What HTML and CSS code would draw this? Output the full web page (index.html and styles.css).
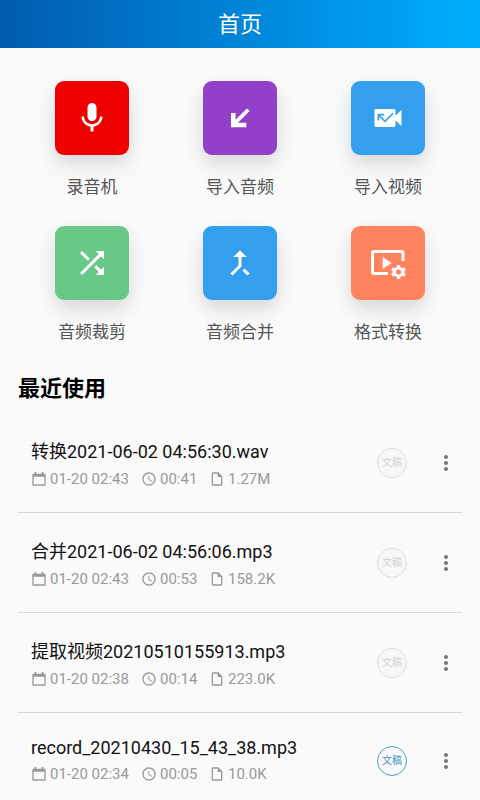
FILE: index.html
```html
<!DOCTYPE html>
<html lang="zh-CN">
<head>
<meta charset="utf-8">
<meta name="viewport" content="width=device-width, initial-scale=1">
<title>首页</title>
<link rel="stylesheet" href="styles.css">
</head>
<body>
<svg class="sprite" aria-hidden="true">
  <symbol id="calendar" viewBox="-1 -1 18 18"><path fill-rule="evenodd" d="M3 0h2v2h6V0h2v2h1.500q1 0 1 1v11.500q0 1-1 1h-13q-1 0-1-1V3q0-1 1-1H3zM2 5.500V14h12V5.500z"/></symbol>
  <symbol id="clock" viewBox="0 0 24 24"><path d="M11.990 2C6.470 2 2 6.480 2 12s4.470 10 9.990 10C17.520 22 22 17.520 22 12S17.520 2 11.990 2zM12 20c-4.420 0-8-3.580-8-8s3.580-8 8-8 8 3.580 8 8-3.580 8-8 8zm.5-13H11v6l5.250 3.150.75-1.230-4.500-2.670z"/></symbol>
  <symbol id="file" viewBox="0 0 24 24"><path d="M14 2H6c-1.100 0-2 .9-2 2v16c0 1.100.9 2 2 2h12c1.100 0 2-.9 2-2V8l-6-6zM6 20V4h7v5h5v11H6z"/></symbol>
  <symbol id="more" viewBox="0 0 24 24"><path d="M12 8c1.100 0 2-.9 2-2s-.9-2-2-2-2 .9-2 2 .9 2 2 2zm0 2c-1.100 0-2 .9-2 2s.9 2 2 2 2-.9 2-2-.9-2-2-2zm0 6c-1.100 0-2 .9-2 2s.9 2 2 2 2-.9 2-2-.9-2-2-2z"/></symbol>
</svg>
<header class="topbar"><h1 class="topbar-title">首页</h1></header>
<main class="content">
  <nav class="tools">
    <button class="tool" type="button">
      <span class="tile red"><svg class="tile-icon" viewBox="0 0 24 24"><path d="M12 14c1.660 0 3-1.340 3-3V5c0-1.660-1.340-3-3-3S9 3.340 9 5v6c0 1.660 1.340 3 3 3zm5.300-3c0 3-2.540 5.100-5.300 5.100S6.700 14 6.700 11H5c0 3.410 2.720 6.230 6 6.720V21h2v-3.280c3.280-.48 6-3.300 6-6.720h-1.700z"/></svg></span>
      <span class="tool-label">录音机</span>
    </button>
    <button class="tool" type="button">
      <span class="tile purple"><svg class="tile-icon" viewBox="0 0 24 24"><path d="M18.400 7.400 16.600 5.600 9 13.200V8.600H6V18.200h10.200v-3h-5.600z"/></svg></span>
      <span class="tool-label">导入音频</span>
    </button>
    <button class="tool" type="button">
      <span class="tile blue"><svg class="tile-icon" viewBox="0 0 24 24"><path fill-rule="evenodd" d="M17 10.500V7c0-.55-.45-1-1-1H4c-.55 0-1 .45-1 1v10c0 .55.450 1 1 1h12c.55 0 1-.45 1-1v-3.500l4 4v-11l-4 4zM10 15l-3.890-3.890v2.550H5V9.220h4.440v1.110H6.890l3.110 3.110 4.990-5 .79.780L10 15z"/></svg></span>
      <span class="tool-label">导入视频</span>
    </button>
    <button class="tool" type="button">
      <span class="tile green"><svg class="tile-icon" viewBox="0 0 24 24"><path d="M10.590 9.170 5.410 4 4 5.410l5.170 5.170 1.420-1.410zM14.500 4l2.040 2.040L4 18.590 5.410 20 17.960 7.460 20 9.500V4h-5.500zm.33 9.410-1.410 1.410 3.130 3.130L14.500 20H20v-5.500l-2.040 2.040-3.130-3.130z"/></svg></span>
      <span class="tool-label">音频裁剪</span>
    </button>
    <button class="tool" type="button">
      <span class="tile blue"><svg class="tile-icon" viewBox="0 0 24 24"><path d="M17 20.410 18.410 19 15 15.590 13.590 17 17 20.410zM7.500 8H11v5.590L5.590 19 7 20.410l6-6V8h3.500L12 3.500 7.500 8z"/></svg></span>
      <span class="tool-label">音频合并</span>
    </button>
    <button class="tool" type="button">
      <span class="tile orange"><svg class="tile-icon" viewBox="0 0 36 36"><path d="M18 30H4q-3 0-3-3V8q0-3 3-3h27.500q3 0 3 3v8h-3V8H4v19h14z"/><path d="M12.700 12v12l9-6z"/><g transform="translate(28.500 27)"><path class="gear" d="M-1.800-7.500h3.600l.5 2.300 1.500.9 2.300-.8 1.800 3.100-1.700 1.500v1l1.700 1.500-1.800 3.100-2.300-.8-1.500.9-.5 2.300h-3.600l-.5-2.300-1.500-.9-2.300.8-1.800-3.100L-6.200.5v-1l-1.700-1.500 1.800-3.100 2.300.8 1.500-.9z"/><circle class="gear-hole" r="2.600"/></g></svg></span>
      <span class="tool-label">格式转换</span>
    </button>
  </nav>
  <section>
    <h2 class="section-title">最近使用</h2>
    <ul class="files">
      <li class="file">
        <div class="file-info">
          <div class="file-name">转换2021-06-02 04:56:30.wav</div>
          <div class="meta">
            <span class="meta-item date"><svg class="meta-icon"><use href="#calendar"/></svg>01-20 02:43</span>
            <span class="meta-item time"><svg class="meta-icon"><use href="#clock"/></svg>00:41</span>
            <span class="meta-item"><svg class="meta-icon"><use href="#file"/></svg>1.27M</span>
          </div>
        </div>
        <button class="draft" type="button" disabled>文稿</button>
        <button class="more" type="button" aria-label="更多"><svg class="more-icon"><use href="#more"/></svg></button>
      </li>
      <li class="file">
        <div class="file-info">
          <div class="file-name">合并2021-06-02 04:56:06.mp3</div>
          <div class="meta">
            <span class="meta-item date"><svg class="meta-icon"><use href="#calendar"/></svg>01-20 02:43</span>
            <span class="meta-item time"><svg class="meta-icon"><use href="#clock"/></svg>00:53</span>
            <span class="meta-item"><svg class="meta-icon"><use href="#file"/></svg>158.2K</span>
          </div>
        </div>
        <button class="draft" type="button" disabled>文稿</button>
        <button class="more" type="button" aria-label="更多"><svg class="more-icon"><use href="#more"/></svg></button>
      </li>
      <li class="file">
        <div class="file-info">
          <div class="file-name">提取视频20210510155913.mp3</div>
          <div class="meta">
            <span class="meta-item date"><svg class="meta-icon"><use href="#calendar"/></svg>01-20 02:38</span>
            <span class="meta-item time"><svg class="meta-icon"><use href="#clock"/></svg>00:14</span>
            <span class="meta-item"><svg class="meta-icon"><use href="#file"/></svg>223.0K</span>
          </div>
        </div>
        <button class="draft" type="button" disabled>文稿</button>
        <button class="more" type="button" aria-label="更多"><svg class="more-icon"><use href="#more"/></svg></button>
      </li>
      <li class="file">
        <div class="file-info">
          <div class="file-name">record_20210430_15_43_38.mp3</div>
          <div class="meta">
            <span class="meta-item date"><svg class="meta-icon"><use href="#calendar"/></svg>01-20 02:34</span>
            <span class="meta-item time"><svg class="meta-icon"><use href="#clock"/></svg>00:05</span>
            <span class="meta-item"><svg class="meta-icon"><use href="#file"/></svg>10.0K</span>
          </div>
        </div>
        <button class="draft" type="button">文稿</button>
        <button class="more" type="button" aria-label="更多"><svg class="more-icon"><use href="#more"/></svg></button>
      </li>
    </ul>
  </section>
</main>
</body>
</html>
```
FILE: styles.css
```css
* { box-sizing: border-box; }
body {
  margin: 0;
  background: #fafafa;
  color: #111;
  font-family: Roboto, "Noto Sans CJK SC", sans-serif;
}
button {
  margin: 0;
  padding: 0;
  border: 0;
  background: none;
  font: inherit;
  color: inherit;
}
.sprite { display: none; }
.topbar {
  display: flex;
  align-items: center;
  justify-content: center;
  height: 48px;
  padding-top: 2px;
  background: linear-gradient(90deg, #005baf, #00aeff);
}
.topbar-title {
  margin: 0;
  color: #fff;
  font-size: 22px;
  font-weight: 400;
  line-height: 32px;
}
.content { padding: 33px 18px 0; }
.tools {
  display: grid;
  grid-template-columns: repeat(3, 1fr);
  row-gap: 26px;
}
.tool {
  display: flex;
  flex-direction: column;
  align-items: center;
  gap: 20px;
}
.tile {
  display: flex;
  align-items: center;
  justify-content: center;
  width: 74px;
  height: 74px;
  border-radius: 9px;
  box-shadow: 0 9px 20px rgba(0, 0, 0, 0.14);
}
.red { background: #ef0000; }
.purple { background: #9340c8; }
.blue { background: #339fee; }
.green { background: #69c787; }
.orange { background: #ff835f; }
.tile-icon {
  width: 36px;
  height: 36px;
  fill: #fff;
  overflow: visible;
}
.gear { stroke: #ff835f; stroke-width: 1; }
.gear-hole { fill: #ff835f; }
.tool-label {
  color: #555;
  font-size: 17px;
  line-height: 25px;
}
.section-title {
  margin: 28px 0 0;
  font-size: 22px;
  font-weight: 700;
  line-height: 32px;
  color: #000;
}
.files {
  margin: 8px 0 0;
  padding: 0;
  list-style: none;
}
.file {
  display: flex;
  align-items: center;
  padding: 24px 0 23px 13px;
  border-bottom: 1px solid #d8d8d8;
}
.file-info { flex: 1; }
.file-name {
  font-size: 18px;
  line-height: normal;
}
.meta {
  display: flex;
  margin-top: 6px;
  color: #999;
  font-size: 15px;
  line-height: 20px;
}
.meta-item {
  display: flex;
  align-items: center;
  gap: 3px;
}
.date { width: 110px; }
.time { width: 68px; }
.meta-icon {
  width: 16px;
  height: 16px;
  fill: #999;
}
.draft {
  width: 30px;
  height: 30px;
  border: 1px solid #4b9ccb;
  border-radius: 50%;
  color: #3c8fc4;
  font-size: 10px;
  line-height: 14px;
}
.draft:disabled {
  border-color: #ddd;
  background: #f7f7f7;
  color: #d2d2d2;
}
.more {
  display: flex;
  margin-left: 27px;
  margin-right: 4px;
}
.more-icon {
  width: 24px;
  height: 24px;
  fill: #777;
}
```
